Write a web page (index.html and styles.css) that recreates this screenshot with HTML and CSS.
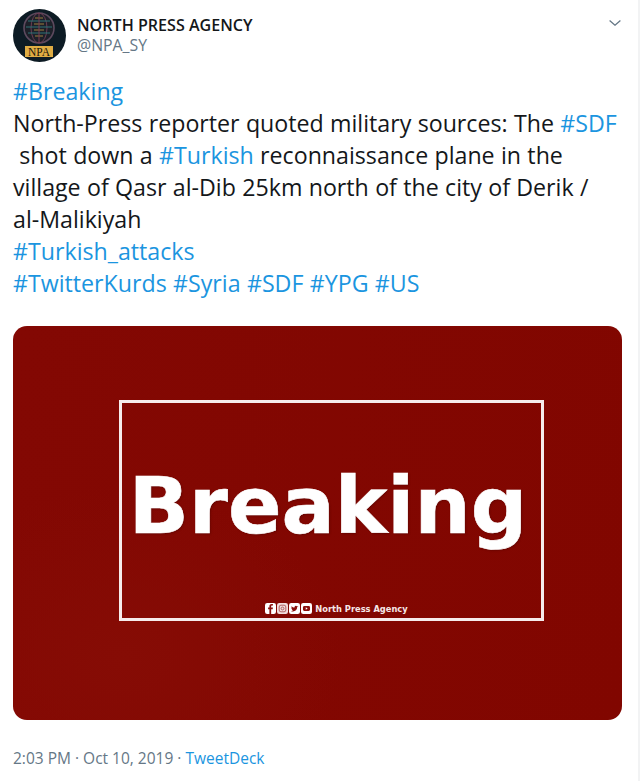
FILE: index.html
```html
<!DOCTYPE html>
<html lang="en">
<head>
<meta charset="utf-8">
<title>North Press Agency tweet</title>
<link rel="stylesheet" href="styles.css">
</head>
<body>
<main class="tweet">
  <header class="head">
    <svg class="avatar" viewBox="0 0 53 53" aria-hidden="true">
      <circle cx="26.5" cy="26.500" r="26.500" fill="#0d1b24"/>
      <circle cx="26" cy="19" r="15" fill="#1d2029"/>
      <circle cx="26" cy="19" r="15" fill="none" stroke="#5d4a5e" stroke-width="1.600"/>
      <ellipse cx="26" cy="19" rx="8" ry="15" fill="none" stroke="#6b3c52" stroke-width="1"/>
      <path d="M15 12h22M13 18h26M15 24h22" stroke="#2f7377" stroke-width="1.200"/>
      <path d="M22 9h8M21 15h10M21 21h10M22 27h8" stroke="#9c7f3c" stroke-width="1.200"/>
      <path d="M26 4v30" stroke="#7b3a50" stroke-width="1"/>
      <rect x="12" y="37" width="28" height="11" fill="#e0ad44"/>
      <text x="26" y="46.800" class="avatar-text" text-anchor="middle">NPA</text>
    </svg>
    <div class="names">
      <div class="name">NORTH PRESS AGENCY</div>
      <div class="handle">@NPA_SY</div>
    </div>
    <svg class="chevron" viewBox="0 0 12 6" aria-hidden="true">
      <path d="M.6.600L6 5.200 11.400.600" fill="none" stroke="#657786" stroke-width="1.300"/>
    </svg>
  </header>
  <p class="text"><a>#Breaking</a><br>North-Press reporter quoted military sources: The <a>#SDF</a><br>&nbsp;shot down a <a>#Turkish</a> reconnaissance plane in the<br>village of Qasr al-Dib 25km north of the city of Derik /<br>al-Malikiyah<br><a>#Turkish_attacks</a><br><a>#TwitterKurds</a> <a>#Syria</a> <a>#SDF</a> <a>#YPG</a> <a>#US</a></p>
  <figure class="media">
    <div class="frame">
      <div class="headline">Breaking</div>
      <div class="brand">
        <span class="socials">
          <svg class="social" viewBox="0 0 10 10" aria-hidden="true"><rect width="10" height="10" rx="2" fill="#fff"/><path d="M5.600 10V5.600H7l.2-1.600H5.600V3.100c0-.5.2-.8.8-.8h.8V.9H6.100C4.800.9 4 1.600 4 3v1H2.800v1.600H4V10z" fill="#8a0f0c"/></svg>
          <svg class="social" viewBox="0 0 10 10" aria-hidden="true"><rect width="10" height="10" rx="2" fill="#f1dcdc"/><rect x="2" y="2" width="6" height="6" rx="1.600" fill="none" stroke="#a55" stroke-width=".8"/><circle cx="5" cy="5" r="1.300" fill="none" stroke="#a55" stroke-width=".8"/></svg>
          <svg class="social" viewBox="0 0 10 10" aria-hidden="true"><rect width="10" height="10" rx="2" fill="#fff"/><path d="M8.300 3.200c-.3.1-.5.2-.8.2.3-.2.5-.4.6-.7-.3.2-.6.3-.9.3a1.300 1.300 0 0 0-2.200 1.200C3.900 4.200 3 3.700 2.300 2.900c-.3.6-.1 1.300.4 1.700-.2 0-.4-.1-.6-.2 0 .6.400 1.200 1 1.300-.2.100-.4.100-.6 0 .2.500.6.900 1.200.900-.6.500-1.300.7-2 .6 2.700 1.500 5.800-.3 5.800-3.700.3-.2.600-.5.800-.8z" fill="#8a0f0c"/></svg>
          <svg class="social" viewBox="0 0 10 10" aria-hidden="true"><rect width="10" height="10" rx="2" fill="#fff"/><rect x="1.800" y="2.800" width="6.400" height="4.400" rx="1.200" fill="#8a0f0c"/><path d="M4.300 3.900v2.200L6.100 5z" fill="#fff"/></svg>
        </span>
        <span class="brand-name">North Press Agency</span>
      </div>
    </div>
  </figure>
  <footer class="meta">2:03 PM · Oct 10, 2019 · <a>TweetDeck</a></footer>
</main>
</body>
</html>
```
FILE: styles.css
```css
html, body {
  margin: 0;
  background: #fff;
}
body {
  font-family: "Open Sans", "Noto Sans", sans-serif;
  color: #14171a;
  width: 640px;
  height: 781px;
  overflow: hidden;
}
.tweet {
  box-sizing: border-box;
  height: 781px;
  padding: 9px 17px 0 13px;
  border-right: 2px solid #f2f3f4;
}
.head {
  display: flex;
  align-items: flex-start;
  gap: 11px;
}
.avatar {
  width: 53px;
  height: 53px;
  flex: none;
}
.avatar-text {
  font-family: "Liberation Serif", serif;
  font-size: 11.500px;
  fill: #20150a;
}
.names {
  flex: 1;
  padding-top: 6px;
}
.name {
  font-size: 16.100px;
  font-weight: 600;
  line-height: 20px;
}
.handle {
  font-size: 15.800px;
  line-height: 20px;
  color: #657786;
}
.chevron {
  width: 12px;
  height: 6px;
  margin-top: 11px;
  flex: none;
}
a {
  color: #1b95e0;
  text-decoration: none;
}
.text {
  margin: 13px 0 0;
  font-size: 23.200px;
  line-height: 32px;
  word-spacing: .3px;
  white-space: nowrap;
}
.media {
  box-sizing: border-box;
  margin: 27px 0 0;
  width: 609px;
  height: 394px;
  border-radius: 14px;
  background:
    radial-gradient(ellipse 220px 170px at 110px 330px, #860c05, rgba(134, 12, 5, 0)),
    linear-gradient(100deg, #830803, #810600);
  padding-top: 74px;
}
.frame {
  box-sizing: border-box;
  width: 425px;
  height: 221px;
  margin-left: 106px;
  border: 3px solid #f6ecec;
  display: flex;
  flex-direction: column;
  align-items: center;
}
.headline {
  font-family: "DejaVu Sans", sans-serif;
  font-weight: 700;
  font-size: 79px;
  line-height: 90px;
  color: #fff;
  margin-top: 58px;
  margin-right: 7px;
  -webkit-text-stroke: .6px #fff;
  text-shadow: 1px 1px 2px rgba(60, 0, 0, .45);
}
.brand {
  display: flex;
  align-items: center;
  gap: 3px;
  margin-top: 52px;
  margin-left: 10px;
}
.socials {
  display: flex;
  gap: 1px;
}
.social {
  width: 11px;
  height: 11px;
}
.brand-name {
  font-family: "DejaVu Sans", sans-serif;
  font-size: 8.300px;
  font-weight: 700;
  color: #f6e8e8;
}
.meta {
  margin-top: 27px;
  font-size: 15.500px;
  line-height: 22px;
  color: #657786;
}
```
